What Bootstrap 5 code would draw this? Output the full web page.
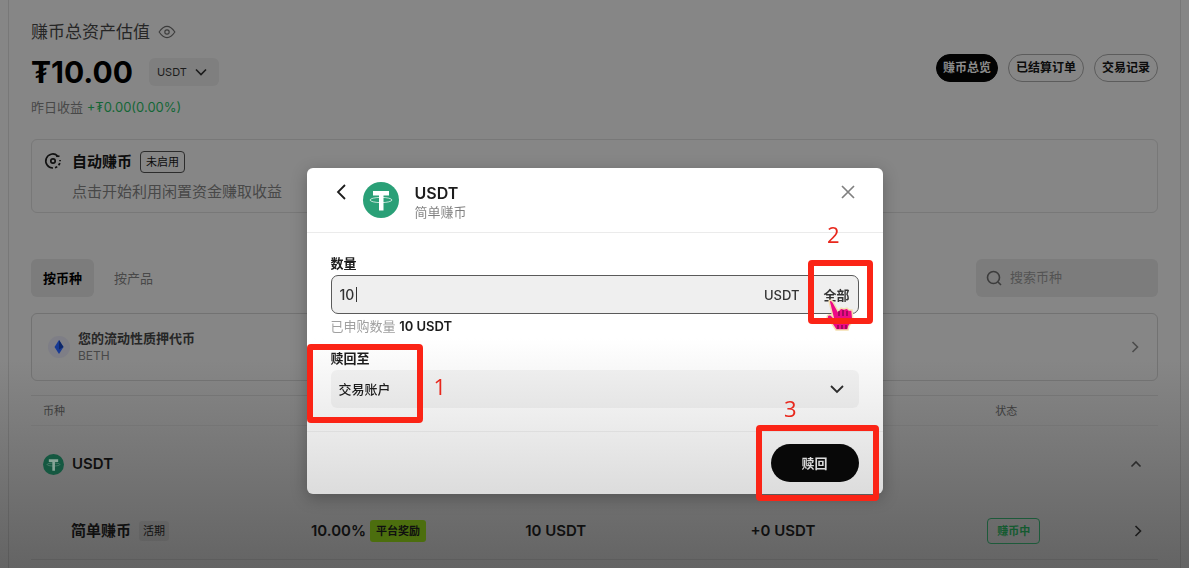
<!DOCTYPE html>
<html lang="zh-CN">
<head>
<meta charset="utf-8">
<meta name="viewport" content="width=device-width, initial-scale=1">
<title>赚币</title>
<link href="https://cdn.jsdelivr.net/npm/bootstrap@5.3.0/dist/css/bootstrap.min.css" rel="stylesheet">
<style>
  body {
    font-family: Inter, "Noto Sans CJK SC", sans-serif;
    background: linear-gradient(#868686 0, #868686 360px, #646464 568px) #646464 no-repeat;
    color: #0c0c0c;
    overflow: hidden;
    min-height: 100vh;
  }
  .fs-11 { font-size: 11px; line-height: 16px; }
  .fs-12 { font-size: 12px; line-height: 18px; }
  .fs-13 { font-size: 13px; line-height: 18px; }
  .fs-15 { font-size: 15px; line-height: 22px; }
  .fs-17 { font-size: 17px; line-height: 24px; }
  .tone-dim { color: #484848; }
  .tone-mid { color: #262626; }
  .tone-gain { color: #146636; }
  .gap-10 { gap: 10px; }

  .earn-panel {
    margin: 0 8px;
    padding: 20px 22px 0;
    border: solid #0000001a;
    border-width: 0 1px;
    min-height: 100vh;
  }
  .total-value { font-size: 30px; line-height: 32px; font-weight: 700; color: #000; }
  .gain-line { margin-top: 10px; }
  .unit-btn { height: 28px; padding: 0 12px 0 8px; border: 0; border-radius: 6px; background: #7f7f7f; color: #1c1c1c; }
  .pill-btn { height: 28px; border: 1px solid #5c5c5c; border-radius: 14px; background: none; font-weight: 600; padding: 0 7px; color: #0c0c0c; }
  .pill-btn.is-on { background: #030303; border-color: #030303; color: #8c8c8c; padding: 0 6px; }
  .soft-box { border: 1px solid #787878; border-radius: 6px; }
  .auto-box { margin-top: 23px; padding: 11px 12px; height: 74px; }
  .off-tag { border: 1px solid #2c2c2c; border-radius: 4px; padding: 2px 5px; }
  .view-bar { margin: 46px 0 16px; }
  .view-tab { height: 38px; border: 0; border-radius: 6px; background: none; padding: 0 12px; }
  .view-tab.is-on { background: #7c7c7c; font-weight: 700; }
  .search-box { width: 182px; height: 38px; border-radius: 6px; background: #7c7c7c; padding: 0 10px; }
  .search-box input { font-size: 13px; color: #4c4c4c; }
  .search-box input::placeholder { color: #535353; opacity: 1; }
  .stake-box { height: 68px; padding: 0 18px 0 16px; margin-bottom: 14px; border-color: #727272; }
  .eth-dot { width: 22px; height: 22px; border-radius: 50%; background: #7e7e86; }

  .coin-table { width: 100%; table-layout: fixed; font-size: 15px; font-weight: 600; color: #101010; }
  .coin-table th, .coin-table td { padding: 0; vertical-align: middle; white-space: nowrap; }
  .coin-table thead tr { height: 30px; border: solid #757575; border-width: 1px 0; }
  .coin-table thead th { font-weight: 400; color: #3c3c3c; }
  .col-coin { width: 280px; }
  .col-rate { width: 19%; }
  .col-held { width: 20%; }
  .col-gain { width: 21%; }
  .coin-row { height: 77px; }
  .plan-row { height: 57px; border-bottom: 1px solid #5d5d5d; }
  .term-tag { background: #0000000f; border-radius: 3px; padding: 2px 4px; font-weight: 400; }
  .bonus-tag { background: #4c6e0e; border-radius: 3px; padding: 3px 6px; }
  .state-tag { border: 1px solid #1d5a3a; border-radius: 4px; padding: 4px 9px; color: #145a30; }

  .redeem-dialog { max-width: 576px; margin: 168px auto 0; }
  .redeem-box {
    border: 0; border-radius: 6px; color: #1c1c1c;
    background: linear-gradient(#fff 0, #fff 170px, #dcdcdc 100%);
    box-shadow: 0 4px 16px #0004;
  }
  .redeem-head { height: 65px; border-bottom: 1px solid #ebebeb; padding: 0 28px; }
  .redeem-name { font-size: 16px; line-height: 20px; font-weight: 600; }
  .redeem-body { padding: 21px 24px 23px; }
  .redeem-foot { height: 63px; border-top: 1px solid #dedede; padding: 0 24px; }
  .icon-btn { border: 0; background: none; padding: 0; line-height: 0; }
  .field-name { font-weight: 600; display: block; margin-bottom: 3px; }
  .amount-box { height: 39px; border: 1px solid #5a5a5a; border-radius: 7px; background: #efefef; padding: 0 8px; font-weight: 500; color: #333; }
  .amount-box input { width: 16px; font-size: 14px; font-weight: 500; color: #333; }
  .caret-bar { width: 1px; height: 15px; background: #333; }
  .all-btn { color: #333; }
  .hint-line { margin: 3px 0 14px; }
  .hint-line span { color: #a0a0a0; }
  .account-select {
    height: 38px; border: 0; border-radius: 6px; padding: 0 8px; font-size: 13px; font-weight: 500; color: #1c1c1c;
    appearance: none; background: #0000000a;
  }
  .select-arrow { right: 15px; top: 14px; pointer-events: none; }
  .redeem-btn { width: 88px; height: 38px; border: 0; border-radius: 19px; background: #080808; color: #dcdcdc; font-weight: 600; }
  .mark-frame { border: 6px solid #fb2416; border-radius: 4px; pointer-events: none; }
  .mark-num { font-family: "Open Sans", sans-serif; font-size: 22px; line-height: 24px; color: #e8271c; }
  .frame-1 { left: 0; top: 176px; width: 116px; height: 79px; }
  .frame-2 { right: 10px; top: 92px; width: 65px; height: 64px; }
  .frame-3 { right: 4px; top: 257px; width: 123px; height: 76px; }
  .num-1 { left: 127px; top: 206px; }
  .num-2 { right: 43px; top: 54px; }
  .num-3 { right: 86px; top: 228px; }
  .hand-cursor { right: 28px; top: 131px; pointer-events: none; }
</style>
<script src="https://cdn.jsdelivr.net/npm/bootstrap@5.3.0/dist/js/bootstrap.bundle.min.js"></script>
</head>
<body>
<svg width="0" height="0" class="position-absolute" aria-hidden="true">
  <symbol id="tether" viewBox="0 0 36 36">
    <path d="M10 9h16v4.500h-5.500v15h-4.500v-15h-6z" fill="currentColor"/>
    <ellipse cx="18" cy="18" rx="11" ry="2.600" fill="none" stroke="currentColor" stroke-width="1" opacity=".7"/>
  </symbol>
</svg>

<main class="earn-panel">
  <div class="d-flex justify-content-between">
    <div>
      <div class="d-flex align-items-center gap-2 fs-17 tone-mid">赚币总资产估值
        <svg width="18" height="14" viewBox="0 0 20 16" fill="none" stroke="#3c3c3c" stroke-width="1.300"><path d="M1 8Q10-5 19 8Q10 21 1 8z"/><circle cx="10" cy="8" r="2.500"/></svg>
      </div>
      <div class="d-flex align-items-center gap-3 mt-2 pt-1">
        <div class="total-value">₮10.00</div>
        <button class="unit-btn fs-11 d-flex align-items-center gap-2">USDT
          <svg width="12" height="8" viewBox="0 0 12 8" fill="none" stroke="currentColor" stroke-width="1.600"><path d="M1 1.500l5 5 5-5"/></svg>
        </button>
      </div>
      <div class="gain-line fs-13 tone-dim">昨日收益 <span class="tone-gain">+₮0.00(0.00%)</span></div>
    </div>
    <nav class="d-flex align-items-center gap-10 fs-12">
      <button class="pill-btn is-on">赚币总览</button>
      <button class="pill-btn">已结算订单</button>
      <button class="pill-btn">交易记录</button>
    </nav>
  </div>

  <section class="soft-box auto-box d-flex gap-10">
    <svg width="18" height="20" viewBox="0 -1 18 20" fill="none" stroke="#111" stroke-width="1.700"><path d="M13.500 3.800A7 7 0 1 0 9 16"/><path d="M15.500 4.200h-3.400"/><path d="M11 15.700A7 7 0 0 0 16 8" stroke-dasharray="2.500 1.800"/><circle cx="9" cy="9" r="2.200"/></svg>
    <div>
      <div class="d-flex align-items-center gap-2 fs-15 fw-bold">自动赚币 <span class="off-tag fs-11 fw-normal">未启用</span></div>
      <div class="fs-15 tone-dim mt-2">点击开始利用闲置资金赚取收益</div>
    </div>
  </section>

  <div class="view-bar d-flex justify-content-between">
    <div class="d-flex gap-2 fs-13">
      <button class="view-tab is-on">按币种</button>
      <button class="view-tab tone-dim">按产品</button>
    </div>
    <label class="search-box d-flex align-items-center gap-2">
      <svg class="flex-shrink-0" width="16" height="16" viewBox="0 0 16 16" fill="none" stroke="#3c3c3c" stroke-width="1.600"><circle cx="7.500" cy="7.500" r="6"/><path d="M12 12l3 3"/></svg>
      <input type="text" class="border-0 bg-transparent p-0 w-100" placeholder="搜索币种" aria-label="搜索币种">
    </label>
  </div>

  <section class="soft-box stake-box d-flex align-items-center gap-2">
    <span class="eth-dot d-flex align-items-center justify-content-center">
      <svg width="10" height="14" viewBox="0 0 10 14"><path d="M5 0l4.500 7L5 14 .5 7z" fill="#183a94"/><path d="M5 0l4.500 7L5 9.500z" fill="#0d2668"/></svg>
    </span>
    <div class="flex-grow-1">
      <div class="fs-13 fw-bold tone-mid">您的流动性质押代币</div>
      <div class="fs-12 tone-dim">BETH</div>
    </div>
    <svg width="8" height="12" viewBox="0 0 8 12" fill="none" stroke="#4c4c4c" stroke-width="1.600"><path d="M1.500 1l5 5-5 5"/></svg>
  </section>

  <table class="coin-table">
    <thead>
      <tr class="fs-11"><th class="col-coin"><span class="ps-2 ms-1">币种</span></th><th class="col-rate"></th><th class="col-held"></th><th class="col-gain"></th><th><span class="ps-2">状态</span></th></tr>
    </thead>
    <tbody>
      <tr class="coin-row">
        <td colspan="4"><div class="d-flex align-items-center gap-2 fs-15 ps-2"><svg class="ms-1" width="21" height="21" viewBox="0 0 36 36" color="#87a497"><circle cx="18" cy="18" r="18" fill="#155841"/><use href="#tether"/></svg>USDT</div></td>
        <td><div class="d-flex justify-content-end"><svg class="me-3" width="12" height="8" viewBox="0 0 12 8" fill="none" stroke="#2c2c2c" stroke-width="1.600"><path d="M1.500 6.500l4.500-4.500 4.500 4.500"/></svg></div></td>
      </tr>
      <tr class="plan-row">
        <td><div class="d-flex align-items-center gap-1 ps-4 fs-15"><span class="ps-3">简单赚币</span><span class="term-tag fs-11 ms-1">活期</span></div></td>
        <td><div class="d-flex align-items-center gap-1">10.00% <span class="bonus-tag fs-11">平台奖励</span></div></td>
        <td>10 USDT</td>
        <td>+0 USDT</td>
        <td><div class="d-flex align-items-center justify-content-between"><span class="state-tag fs-11">赚币中</span><svg class="me-3" width="8" height="12" viewBox="0 0 8 12" fill="none" stroke="#1c1c1c" stroke-width="1.600"><path d="M1.500 1l5 5-5 5"/></svg></div></td>
      </tr>
    </tbody>
  </table>
</main>

<div class="modal d-block" tabindex="-1" role="dialog" aria-label="赎回">
  <div class="modal-dialog redeem-dialog">
    <div class="modal-content redeem-box">
      <header class="redeem-head d-flex align-items-center">
        <button class="icon-btn mb-3" aria-label="返回"><svg width="12" height="16" viewBox="0 0 12 16" fill="none" stroke="#1c1c1c" stroke-width="1.800"><path d="M10 1L3 8l7 7"/></svg></button>
        <svg class="ms-3" width="36" height="36" viewBox="0 0 36 36" color="#fff"><circle cx="18" cy="18" r="18" fill="#2aa077"/><use href="#tether"/></svg>
        <div class="ms-3 flex-grow-1 pt-1">
          <div class="redeem-name">USDT</div>
          <div class="fs-13 text-black-50">简单赚币</div>
        </div>
        <button class="icon-btn mb-3" aria-label="关闭"><svg width="14" height="14" viewBox="0 0 14 14" stroke="#808080" stroke-width="1.700"><path d="M1 1l12 12M13 1L1 13"/></svg></button>
      </header>
      <div class="redeem-body fs-13">
        <label class="field-name" for="amount">数量</label>
        <div class="amount-box d-flex align-items-center">
          <input id="amount" type="text" class="border-0 bg-transparent p-0" value="10"><span class="caret-bar"></span>
          <span class="ms-auto me-4">USDT</span>
          <button class="all-btn border-0 bg-transparent p-0 fw-bold">全部</button>
        </div>
        <div class="hint-line"><span>已申购数量</span> <b class="fw-semibold">10 USDT</b></div>
        <label class="field-name" for="account">赎回至</label>
        <div class="position-relative">
          <select id="account" class="account-select w-100"><option>交易账户</option></select>
          <svg class="select-arrow position-absolute" width="14" height="10" viewBox="0 0 14 10" fill="none" stroke="#2c2c2c" stroke-width="1.800"><path d="M1 2l6 6 6-6"/></svg>
        </div>
      </div>
      <footer class="redeem-foot d-flex align-items-center justify-content-end">
        <button class="redeem-btn fs-13">赎回</button>
      </footer>

      <svg class="hand-cursor position-absolute" width="30" height="34" viewBox="0 0 30 34"><path d="M4 2q2-2 4 1l5 9 3-3 3 1 3-1 2 2 3 0 1 11-4 5-1 4H11l-4-6-5-6q0-4 4-3l2 2z" fill="#ee0a86" stroke="#f3dfb0" stroke-width="1.500"/><path d="M14 12v5M18 11v6M22 12v5M13 26v4M17 26v4M21 26v4" stroke="#7c0a4a" stroke-width="1.300"/></svg>
      <div class="mark-frame frame-1 position-absolute"></div>
      <div class="mark-frame frame-2 position-absolute"></div>
      <div class="mark-frame frame-3 position-absolute"></div>
      <span class="mark-num num-1 position-absolute">1</span>
      <span class="mark-num num-2 position-absolute">2</span>
      <span class="mark-num num-3 position-absolute">3</span>
    </div>
  </div>
</div>
</body>
</html>
